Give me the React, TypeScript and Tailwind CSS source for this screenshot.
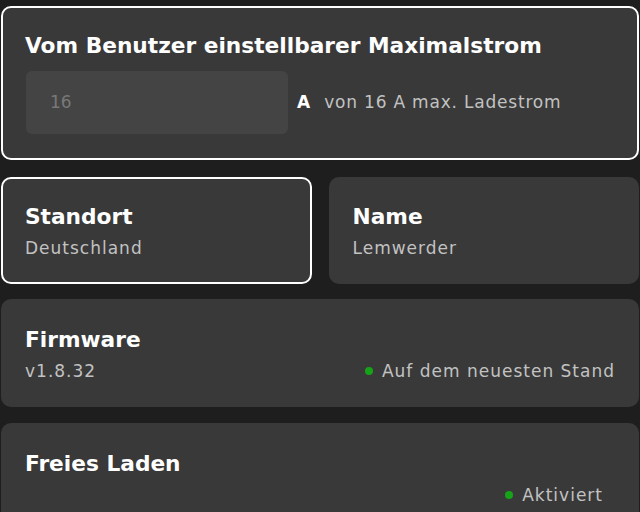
import * as React from "react";

interface InfoCardProps {
  title: string;
  value?: string;
  status?: string;
  statusInset?: boolean;
  selected?: boolean;
  tall?: boolean;
}

const StatusDot: React.FC<{ label: string; inset?: boolean }> = ({ label, inset }) => (
  <div className={"flex items-center gap-[9px] " + (inset ? "mr-[12px]" : "")}>
    <span className="h-[8px] w-[8px] rounded-full bg-[#16a317]" />
    <span className="text-[17px] leading-[20px] text-[#c2c2c2] tracking-[1px]">{label}</span>
  </div>
);

const InfoCard: React.FC<InfoCardProps> = ({ title, value, status, statusInset, selected, tall }) => {
  return (
    <div
      className={
        "rounded-[10px] bg-[#393939] border-2 px-[22px] pb-[24px] " +
        (tall ? "pt-[25px] " : "pt-[24px] ") +
        (selected ? "border-white" : "border-transparent")
      }
    >
      <h3 className="text-[21.7px] leading-[28px] font-bold text-white">{title}</h3>
      <div className="mt-[7px] flex items-end justify-between h-[20px]">
        <span className="text-[17px] leading-[20px] text-[#c2c2c2] tracking-[1px]">{value}</span>
        {status && <StatusDot label={status} inset={statusInset} />}
      </div>
    </div>
  );
};

const App: React.FC = () => {
  return (
    <div
      className="min-h-[512px] bg-[#1e1e1e] px-[1px] pt-[6px] flex flex-col"
      style={{ fontFamily: '"DejaVu Sans", sans-serif' }}
    >
      <div className="rounded-[10px] bg-[#393939] border-2 border-white px-[22px] pt-[24px] pb-[24px]">
        <h2 className="text-[21.7px] leading-[28px] font-bold text-white">
          Vom Benutzer einstellbarer Maximalstrom
        </h2>
        <div className="mt-[11px] flex items-center">
          <div className="ml-[1px] h-[63px] w-[262px] rounded-[6px] bg-[#444444] flex items-center pl-[24px]">
            <span className="text-[17px] text-[#787878]">16</span>
          </div>
          <span className="ml-[9px] text-[17px] font-bold text-white">A</span>
          <span className="ml-[14px] text-[17px] text-[#c2c2c2] tracking-[0.8px]">von 16 A max. Ladestrom</span>
        </div>
      </div>

      <div className="mt-[17px] grid grid-cols-2 gap-[17px]">
        <InfoCard title="Standort" value="Deutschland" selected />
        <InfoCard title="Name" value="Lemwerder" />
      </div>

      <div className="mt-[15px] flex flex-col gap-[16px]">
        <InfoCard title="Firmware" value="v1.8.32" status="Auf dem neuesten Stand" tall />
        <InfoCard title="Freies Laden" status="Aktiviert" statusInset tall />
      </div>
    </div>
  );
};

export default App;
